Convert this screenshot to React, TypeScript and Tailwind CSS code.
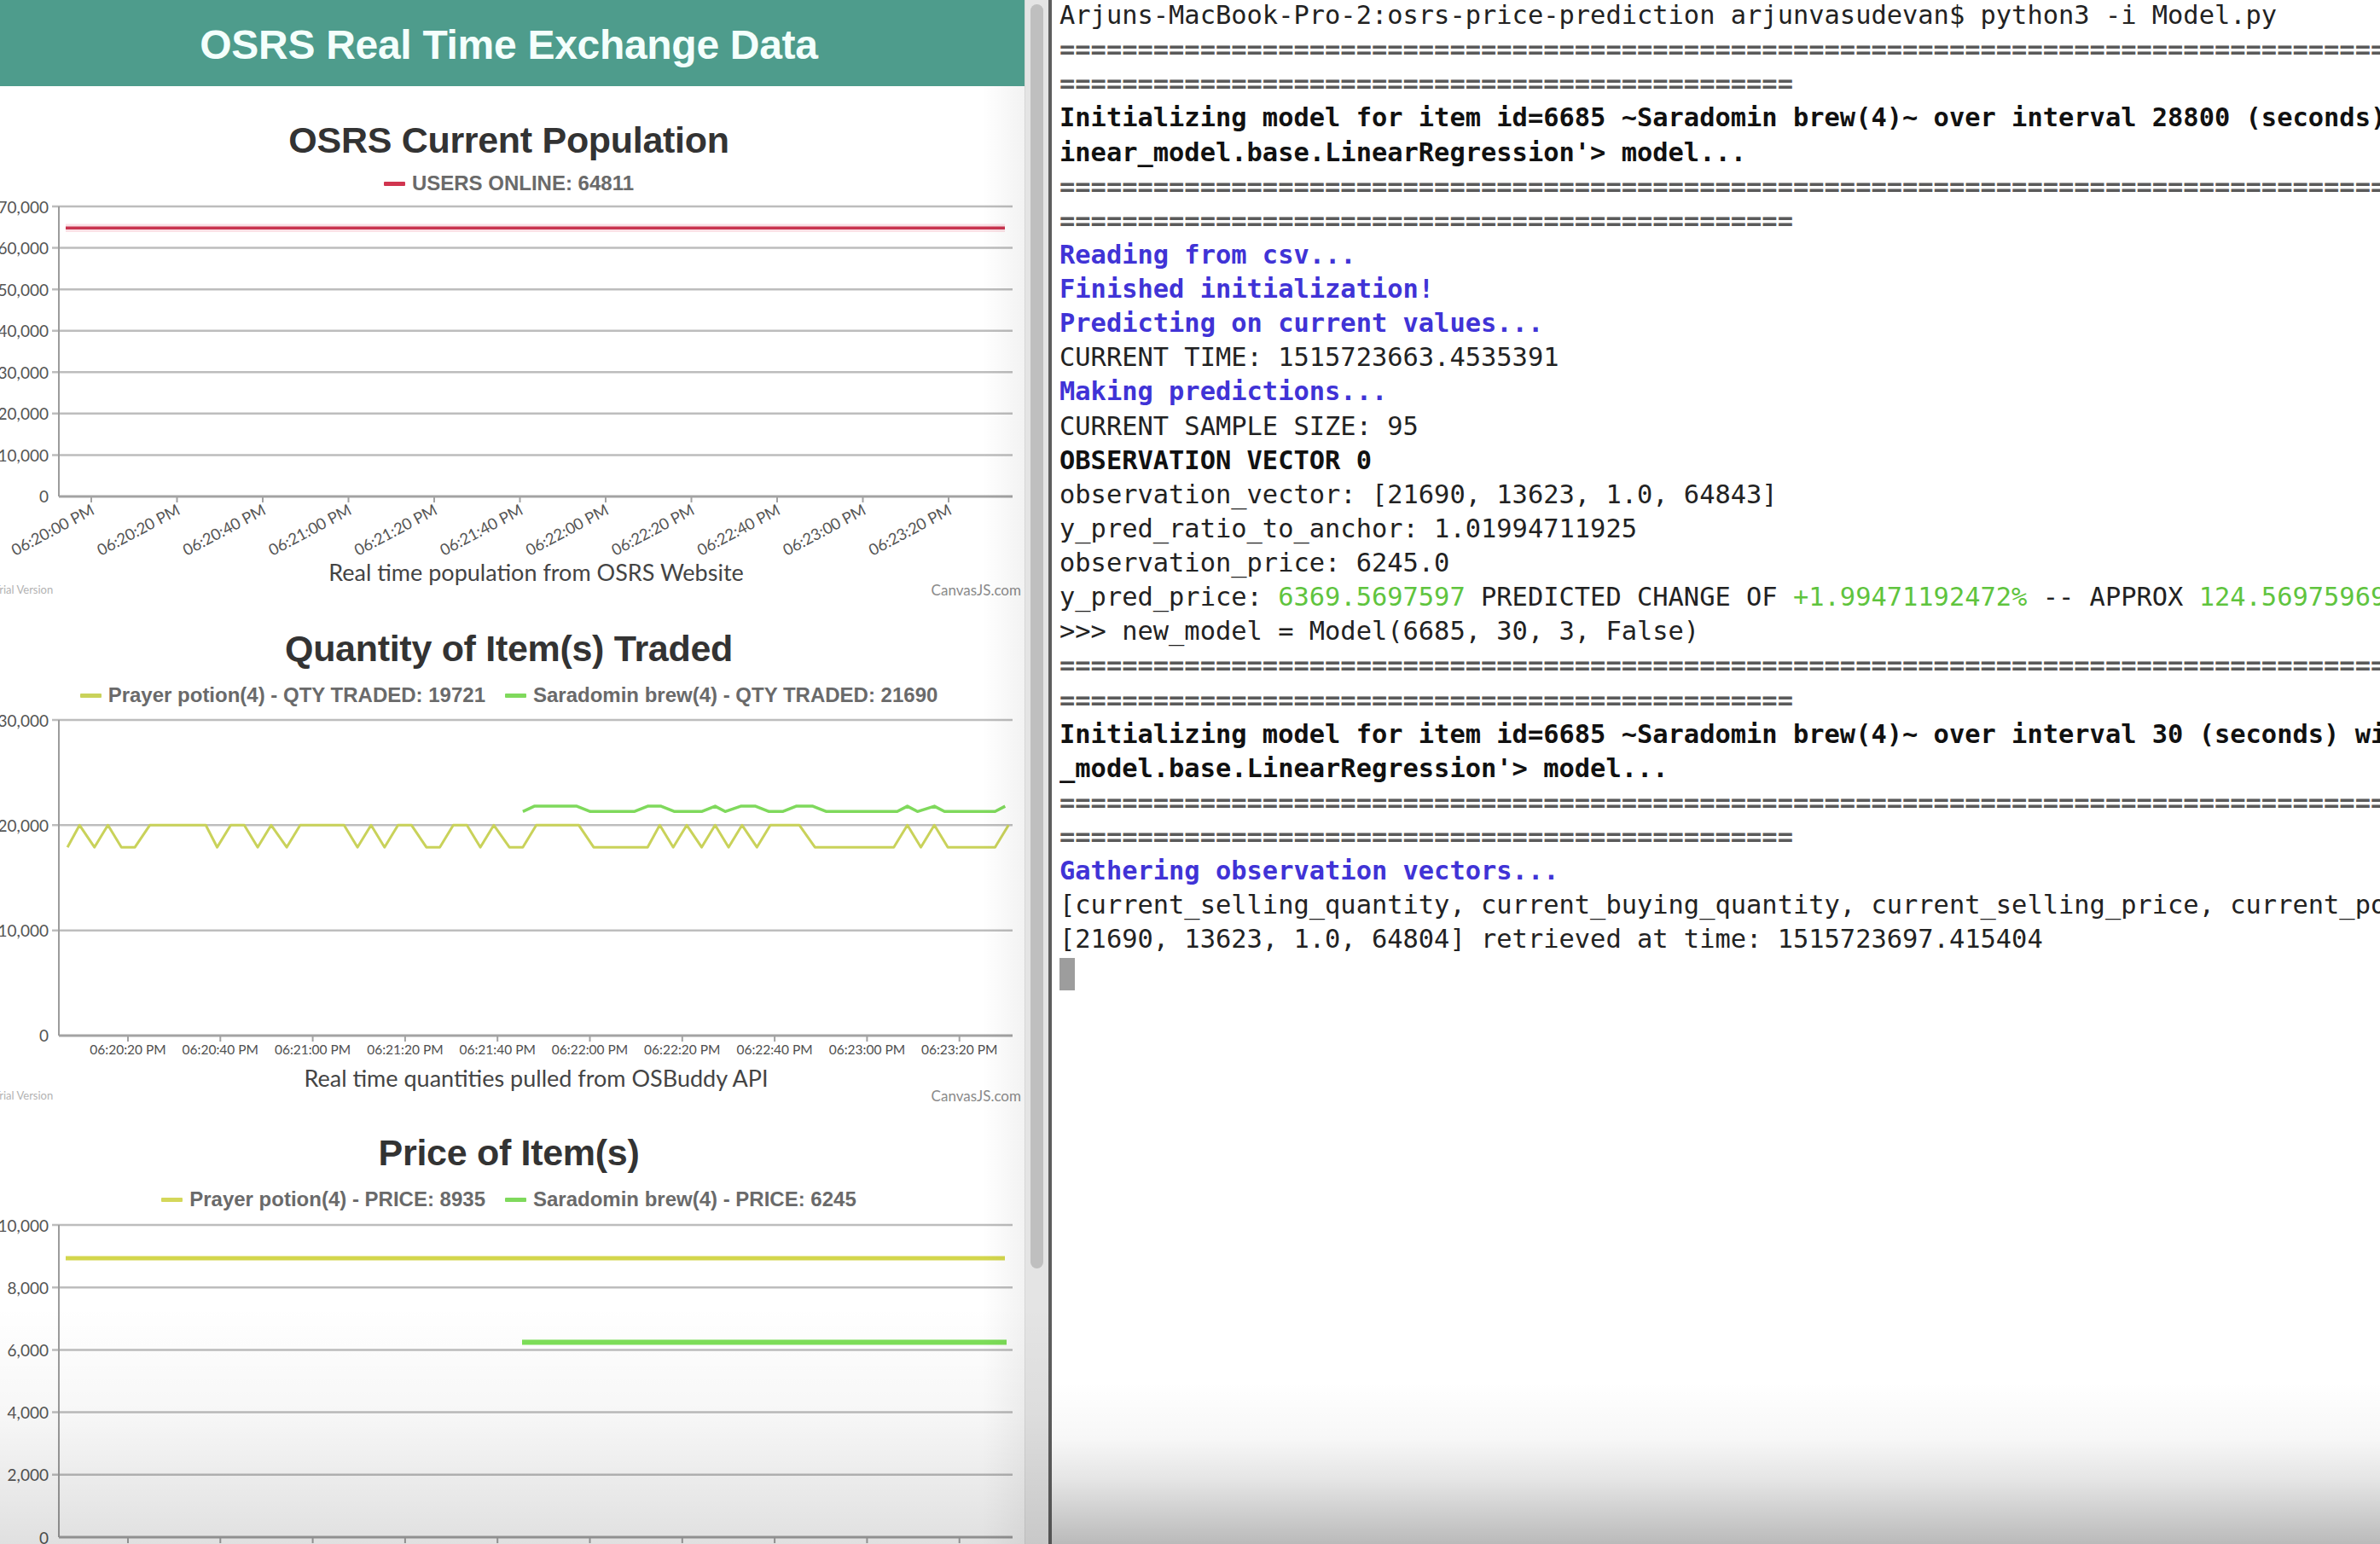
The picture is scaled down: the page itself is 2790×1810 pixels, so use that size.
import React from "react";

const X0 = 69;
const X1 = 1187;
const ZX = 1.2645;

type Line = { pts: [number, number][]; color: string; width: number; halo?: string };

function LegendItem({ color, label }: { color: string; label: string }) {
  return (
    <div className="flex items-center gap-[8px]">
      <div className="w-[25px] h-[5px] rounded-[1px]" style={{ backgroundColor: color }} />
      <span>{label}</span>
    </div>
  );
}

function Plot({
  height,
  grid,
  yLabels,
  ticks,
  xLabels,
  rotated,
  labelOffset,
  lines,
}: {
  height: number;
  grid: number[];
  yLabels: string[];
  ticks: number[];
  xLabels: string[];
  rotated?: boolean;
  labelOffset: number;
  lines: Line[];
}) {
  const bottom = grid[grid.length - 1];
  return (
    <svg width={1200} height={height} className="block shrink-0">
      {grid.map((y, i) => (
        <g key={i}>
          <line
            x1={i === grid.length - 1 ? X0 : X0 - 8}
            x2={X1}
            y1={y}
            y2={y}
            stroke={i === grid.length - 1 ? "#a3a3a3" : "#bdbdbd"}
            strokeWidth={i === grid.length - 1 ? 3 : 2.5}
          />
          <text
            x={57}
            y={y}
            textAnchor="end"
            dominantBaseline="central"
            fontFamily="Lato, 'DejaVu Sans', sans-serif"
            fontSize={19}
            fill="#555"
          >
            {yLabels[i]}
          </text>
        </g>
      ))}
      <line x1={X0} x2={X0} y1={grid[0]} y2={bottom} stroke="#9c9c9c" strokeWidth={2} />
      {ticks.map((x, i) => (
        <g key={i}>
          <line x1={x} x2={x} y1={bottom} y2={bottom + 7} stroke="#a3a3a3" strokeWidth={2} />
          {rotated ? (
            <text
              x={x + 5}
              y={bottom + labelOffset}
              textAnchor="end"
              transform={`rotate(-28 ${x + 5} ${bottom + labelOffset})`}
              fontFamily="Lato, 'DejaVu Sans', sans-serif"
              fontSize={18.5}
              fill="#555"
            >
              {xLabels[i]}
            </text>
          ) : (
            <text
              x={x}
              y={bottom + labelOffset}
              textAnchor="middle"
              dominantBaseline="central"
              fontFamily="Lato, 'DejaVu Sans', sans-serif"
              fontSize={15.5}
              fill="#4f4f4f"
            >
              {xLabels[i]}
            </text>
          )}
        </g>
      ))}
      {lines.map((l, i) => {
        const p = l.pts.map(([x, y]) => `${x.toFixed(1)},${y.toFixed(1)}`).join(" ");
        return (
          <g key={i}>
            {l.halo && <polyline points={p} fill="none" stroke={l.halo} strokeWidth={l.width + 6} strokeOpacity={0.35} />}
            <polyline points={p} fill="none" stroke={l.color} strokeWidth={l.width} strokeLinejoin="round" />
          </g>
        );
      })}
    </svg>
  );
}

function ChartFooter() {
  return (
    <div className="h-[16px] flex items-center justify-between pr-[4px] font-['Lato',sans-serif]">
      <span className="ml-[-7px] text-[13px] text-[#b3b3b3]">Trial Version</span>
      <span className="text-[17px] text-[#8a8a8a]">CanvasJS.com</span>
    </div>
  );
}

const titleCls =
  "h-[50px] leading-[50px] pr-[8px] text-center text-[43px] font-bold text-[#333] tracking-[-0.3px] font-['Liberation_Sans',Arial,sans-serif]";
const legendCls =
  "h-[28px] pr-[8px] flex items-center justify-center gap-[23px] text-[24px] font-bold text-[#6a6a6a] font-['Liberation_Sans',Arial,sans-serif]";
const subCls =
  "h-[26px] leading-[26px] pl-[56px] text-center text-[27px] text-[#444] font-['Lato',sans-serif]";

const rotatedLabels = [
  "06:20:00 PM",
  "06:20:20 PM",
  "06:20:40 PM",
  "06:21:00 PM",
  "06:21:20 PM",
  "06:21:40 PM",
  "06:22:00 PM",
  "06:22:20 PM",
  "06:22:40 PM",
  "06:23:00 PM",
  "06:23:20 PM",
];
const flatLabels = rotatedLabels.slice(1);
const ticks1 = rotatedLabels.map((_, i) => 107 + 100.5 * i);
const ticks2 = flatLabels.map((_, i) => 150 + 108.3 * i);

// population chart: 70,000 at y=13, 0 at y=353
const popY = (v: number) => 13 + ((70000 - v) / 70000) * 340;
// quantity chart: 30,000 at y=15, 0 at y=385
const qtyY = (v: number) => 15 + ((30000 - v) / 30000) * 370;
// price chart: 10,000 at y=16, 0 at y=382
const priceY = (v: number) => 16 + ((10000 - v) / 10000) * 366;

const L = 17900;
const H = 20000;
const prayerQty: [number, number][] = [
  [100, L], [118, H], [140, L], [160, H], [180, L], [200, L], [222, H], [305, H], [322, L], [342, H],
  [362, H], [382, L], [402, H], [425, L], [445, H], [510, H], [530, L], [550, H], [570, L], [590, H],
  [610, H], [632, L], [652, L], [672, H], [692, H], [712, L], [732, H], [755, L], [775, L], [795, H],
  [858, H], [880, L], [960, L], [978, H], [998, L], [1018, H], [1040, L], [1060, H], [1080, L], [1100, H],
  [1122, L], [1142, H], [1185, H], [1208, L], [1325, L], [1345, H], [1365, L], [1385, H], [1405, L],
  [1475, L], [1495, H],
];
const B1 = 21300;
const B2 = 21800;
const brewQty: [number, number][] = [
  [775, B1], [792, B2], [855, B2], [875, B1], [940, B1], [960, B2], [980, B2], [1000, B1], [1040, B1],
  [1060, B2], [1075, B1], [1098, B2], [1120, B2], [1140, B1], [1160, B1], [1180, B2], [1205, B2],
  [1225, B1], [1330, B1], [1345, B2], [1360, B1], [1385, B2], [1400, B1], [1475, B1], [1490, B2],
];

const PRAYER = "#c9d25a";
const BREW = "#7fd95c";

function LeftPanel() {
  return (
    <div className="relative w-[1201px] h-full shrink-0 overflow-hidden bg-white">
      <div className="h-[101px] bg-[#4e9c8c] flex items-center justify-center pr-[8px] pt-[5px]">
        <h1 className="text-[48px] font-bold text-[#f4fffc] tracking-[-0.3px] font-['Liberation_Sans',Arial,sans-serif]">
          OSRS Real Time Exchange Data
        </h1>
      </div>

      {/* population */}
      <div className={`mt-[38px] ${titleCls}`}>OSRS Current Population</div>
      <div className={`mt-[12px] ${legendCls}`}>
        <LegendItem color="#d1354f" label="USERS ONLINE: 64811" />
      </div>
      <Plot
        height={429}
        grid={[0, 1, 2, 3, 4, 5, 6, 7].map((i) => 13 + 48.57 * i)}
        yLabels={["70,000", "60,000", "50,000", "40,000", "30,000", "20,000", "10,000", "0"]}
        ticks={ticks1}
        xLabels={rotatedLabels}
        rotated
        labelOffset={20}
        lines={[
          {
            pts: [
              [77, popY(64811)],
              [1178, popY(64811)],
            ],
            color: "#c9344f",
            width: 3.5,
            halo: "#f3a9b8",
          },
        ]}
      />
      <div className={subCls}>Real time population from OSRS Website</div>
      <ChartFooter />

      {/* quantity */}
      <div className={`mt-[35px] ${titleCls}`}>Quantity of Item(s) Traded</div>
      <div className={`mt-[16px] ${legendCls}`}>
        <LegendItem color={PRAYER} label="Prayer potion(4) - QTY TRADED: 19721" />
        <LegendItem color={BREW} label="Saradomin brew(4) - QTY TRADED: 21690" />
      </div>
      <Plot
        height={422}
        grid={[0, 1, 2, 3].map((i) => 15 + 123.33 * i)}
        yLabels={["30,000", "20,000", "10,000", "0"]}
        ticks={ticks2}
        xLabels={flatLabels}
        labelOffset={16}
        lines={[
          { pts: prayerQty.map(([x, v]) => [x / ZX, qtyY(v)]), color: PRAYER, width: 3 },
          { pts: brewQty.map(([x, v]) => [x / ZX, qtyY(v)]), color: BREW, width: 3.5 },
        ]}
      />
      <div className={subCls}>Real time quantities pulled from OSBuddy API</div>
      <ChartFooter />

      {/* price */}
      <div className={`mt-[33px] ${titleCls}`}>Price of Item(s)</div>
      <div className={`mt-[16px] ${legendCls}`}>
        <LegendItem color="#d4d75a" label="Prayer potion(4) - PRICE: 8935" />
        <LegendItem color={BREW} label="Saradomin brew(4) - PRICE: 6245" />
      </div>
      <Plot
        height={420}
        grid={[0, 1, 2, 3, 4, 5].map((i) => 16 + 73.2 * i)}
        yLabels={["10,000", "8,000", "6,000", "4,000", "2,000", "0"]}
        ticks={ticks2}
        xLabels={flatLabels}
        labelOffset={14}
        lines={[
          {
            pts: [
              [77, priceY(8935)],
              [1178, priceY(8935)],
            ],
            color: "#d3d64c",
            width: 5,
          },
          {
            pts: [
              [612, priceY(6245)],
              [1180, priceY(6245)],
            ],
            color: "#7ddf58",
            width: 6,
          },
        ]}
      />

      {/* soft edge shading from the window frame */}
      <div className="pointer-events-none absolute top-[101px] right-0 bottom-0 w-[50px] bg-gradient-to-r from-transparent to-black/[0.05]" />
    </div>
  );
}

function Scrollbar() {
  return (
    <div className="w-[28px] h-full shrink-0 bg-[#e4e4e4] border-l border-[#d6d6d6] pt-[5px] pl-[6px]">
      <div className="w-[15px] h-[1482px] rounded-full bg-[#bfbfbf]" />
    </div>
  );
}

type Seg = { t: string; k?: "b" | "blue" | "green" | "eq" };

const EQ = "=".repeat(120);
const EQ_SHORT = "=".repeat(47);

const termLines: Seg[][] = [
  [{ t: "Arjuns-MacBook-Pro-2:osrs-price-prediction arjunvasudevan$ python3 -i Model.py" }],
  [{ t: EQ, k: "eq" }],
  [{ t: EQ_SHORT, k: "eq" }],
  [
    {
      t: "Initializing model for item id=6685 ~Saradomin brew(4)~ over interval 28800 (seconds) with <class 'sklearn.l",
      k: "b",
    },
  ],
  [{ t: "inear_model.base.LinearRegression'> model...", k: "b" }],
  [{ t: EQ, k: "eq" }],
  [{ t: EQ_SHORT, k: "eq" }],
  [{ t: "Reading from csv...", k: "blue" }],
  [{ t: "Finished initialization!", k: "blue" }],
  [{ t: "Predicting on current values...", k: "blue" }],
  [{ t: "CURRENT TIME: 1515723663.4535391" }],
  [{ t: "Making predictions...", k: "blue" }],
  [{ t: "CURRENT SAMPLE SIZE: 95" }],
  [{ t: "OBSERVATION VECTOR 0", k: "b" }],
  [{ t: "observation_vector: [21690, 13623, 1.0, 64843]" }],
  [{ t: "y_pred_ratio_to_anchor: 1.01994711925" }],
  [{ t: "observation_price: 6245.0" }],
  [
    { t: "y_pred_price: " },
    { t: "6369.5697597", k: "green" },
    { t: " PREDICTED CHANGE OF " },
    { t: "+1.99471192472%", k: "green" },
    { t: " -- APPROX " },
    { t: "124.569759699999", k: "green" },
  ],
  [{ t: ">>> new_model = Model(6685, 30, 3, False)" }],
  [{ t: EQ, k: "eq" }],
  [{ t: EQ_SHORT, k: "eq" }],
  [
    {
      t: "Initializing model for item id=6685 ~Saradomin brew(4)~ over interval 30 (seconds) with <class 'sklearn.linear",
      k: "b",
    },
  ],
  [{ t: "_model.base.LinearRegression'> model...", k: "b" }],
  [{ t: EQ, k: "eq" }],
  [{ t: EQ_SHORT, k: "eq" }],
  [{ t: "Gathering observation vectors...", k: "blue" }],
  [{ t: "[current_selling_quantity, current_buying_quantity, current_selling_price, current_population]" }],
  [{ t: "[21690, 13623, 1.0, 64804] retrieved at time: 1515723697.415404" }],
];

function segClass(k?: Seg["k"]) {
  if (k === "b") return "font-bold text-[#111]";
  if (k === "blue") return "font-bold text-[#4033d6]";
  if (k === "green") return "text-[#5fc43e]";
  if (k === "eq") return "font-bold text-[#5a5a5a]";
  return "text-[#222]";
}

function Terminal() {
  return (
    <div className="relative flex-1 h-full overflow-hidden bg-white pl-[9px] font-['DejaVu_Sans_Mono',Menlo,monospace] text-[30.4px] leading-[40.13px]">
      <div className="-mt-[2px]">
        {termLines.map((segs, i) => (
          <div key={i} className="h-[40.13px] whitespace-pre overflow-hidden">
            {segs.map((s, j) => (
              <span key={j} className={segClass(s.k)}>
                {s.t}
              </span>
            ))}
          </div>
        ))}
        <div className="h-[40.13px] flex items-center">
          <div className="w-[18px] h-[38px] bg-[#9d9d9d]" />
        </div>
      </div>
    </div>
  );
}

export default function App() {
  return (
    <div className="relative w-[2790px] h-[1810px] flex overflow-hidden bg-white">
      <LeftPanel />
      <Scrollbar />
      <div className="w-[4px] h-full shrink-0 bg-[#5e5e5e]" />
      <Terminal />

      {/* screen vignette along the bottom */}
      <div className="pointer-events-none absolute left-0 bottom-0 w-[1233px] h-[280px] bg-[linear-gradient(to_bottom,rgba(0,0,0,0)_0%,rgba(0,0,0,0.03)_45%,rgba(0,0,0,0.12)_100%)]" />
      <div className="pointer-events-none absolute right-0 bottom-0 w-[1557px] h-[190px] bg-[linear-gradient(to_bottom,rgba(0,0,0,0)_0%,rgba(0,0,0,0.03)_35%,rgba(0,0,0,0.1)_60%,rgba(0,0,0,0.27)_100%)]" />
    </div>
  );
}
